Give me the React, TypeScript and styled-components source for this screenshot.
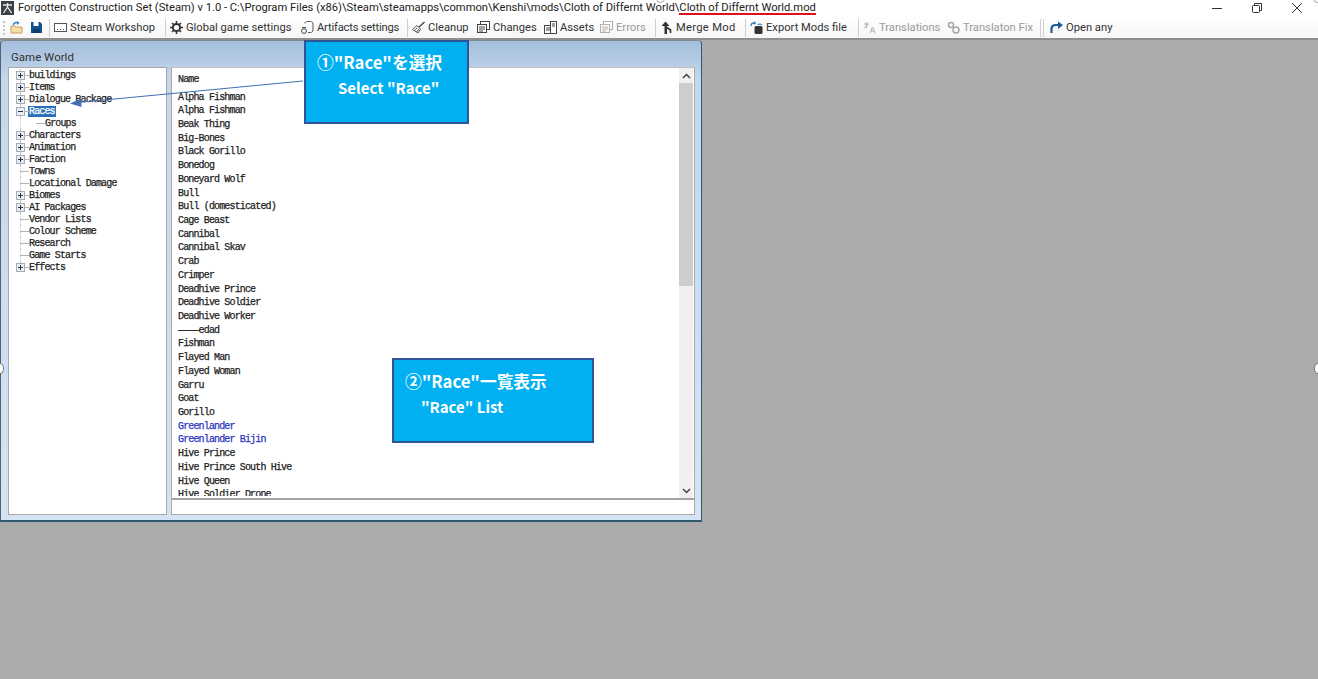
import React from "react";
import styled, { createGlobalStyle } from "styled-components";

const TITLE_PATH = "Forgotten Construction Set (Steam) v 1.0 - C:\\Program Files (x86)\\Steam\\steamapps\\common\\Kenshi\\mods\\Cloth of Differnt World\\";
const TITLE_FILE = "Cloth of Differnt World.mod";

const TreeData = [
  { label: "buildings", kind: "plus" },
  { label: "Items", kind: "plus" },
  { label: "Dialogue Package", kind: "plus" },
  { label: "Races", kind: "minus", selected: true },
  { label: "Groups", kind: "child" },
  { label: "Characters", kind: "plus" },
  { label: "Animation", kind: "plus" },
  { label: "Faction", kind: "plus" },
  { label: "Towns", kind: "leaf" },
  { label: "Locational Damage", kind: "leaf" },
  { label: "Biomes", kind: "plus" },
  { label: "AI Packages", kind: "plus" },
  { label: "Vendor Lists", kind: "leaf" },
  { label: "Colour Scheme", kind: "leaf" },
  { label: "Research", kind: "leaf" },
  { label: "Game Starts", kind: "leaf" },
  { label: "Effects", kind: "plus", last: true },
];

const RaceData = [
  "Alpha Fishman", "Alpha Fishman", "Beak Thing", "Big-Bones", "Black Gorillo", "Bonedog",
  "Boneyard Wolf", "Bull", "Bull (domesticated)", "Cage Beast", "Cannibal", "Cannibal Skav",
  "Crab", "Crimper", "Deadhive Prince", "Deadhive Soldier", "Deadhive Worker", "————edad",
  "Fishman", "Flayed Man", "Flayed Woman", "Garru", "Goat", "Gorillo", "Greenlander",
  "Greenlander Bijin", "Hive Prince", "Hive Prince South Hive", "Hive Queen", "Hive Soldier Drone",
];

const ModifiedRaces = ["Greenlander", "Greenlander Bijin"];

const Svg = (props: React.SVGProps<SVGSVGElement>) => (
  <svg width="13" height="13" viewBox="0 0 13 13" fill="none" {...props} />
);

const AppIcon = () => (
  <svg width="13" height="14" viewBox="0 0 13 14">
    <rect width="13" height="14" fill="#3c3f44" />
    <path d="M2 4h9M6.5 2v4L2.5 12M6.5 6l4 6" stroke="#e8e8e8" strokeWidth="1.3" fill="none" />
  </svg>
);

const OpenIcon = () => (
  <Svg>
    <path d="M1 5h4l1 1h6v6H1z" fill="#f4dca6" stroke="#c9a05a" />
    <path d="M3 4c1-2 3-3 5-2" stroke="#2f7fc1" strokeWidth="1.4" />
    <path d="M7 0l2.5 2L7 4z" fill="#2f7fc1" />
  </Svg>
);

const SaveIcon = () => (
  <Svg>
    <path d="M1 1h9l2 2v9H1z" fill="#12508f" />
    <rect x="3.5" y="1" width="5" height="4" fill="#fff" />
    <rect x="3" y="8" width="7" height="4" fill="#0b3a6c" />
  </Svg>
);

const WorkshopIcon = () => (
  <Svg>
    <rect x="0.5" y="2.5" width="12" height="8" stroke="#555" fill="#fff" />
    <path d="M3 8.5h1M6 8.5h1M9 8.5h1" stroke="#555" />
  </Svg>
);

const GearIcon = () => (
  <Svg>
    <circle cx="6.5" cy="6.5" r="3.6" stroke="#333" strokeWidth="2" />
    <path d="M6.5 0v2.5M6.5 10.5V13M0 6.5h2.5M10.5 6.5H13M2 2l1.8 1.8M9.2 9.2 11 11M11 2 9.2 3.8M3.8 9.2 2 11" stroke="#333" strokeWidth="1.6" />
  </Svg>
);

const ArtifactIcon = () => (
  <Svg>
    <path d="M4 2.5C4 1 5 .5 6.5.5h3c1.5 0 2.5 1 2.5 2.5v6c0 1.5-1 2.5-2.5 2.500H7" stroke="#555" />
    <circle cx="3" cy="10" r="2.400" stroke="#444" />
    <path d="M1 6.500h4" stroke="#666" />
  </Svg>
);

const BroomIcon = () => (
  <Svg>
    <path d="M12.500 1 6.500 6.500" stroke="#444" strokeWidth="1.300" />
    <path d="M5 4.500 8.500 8 6 12 .5 8.500z" fill="#fff" stroke="#555" />
    <path d="M2.500 9.500 5 7M4.500 11 7 8" stroke="#555" />
  </Svg>
);

const ChangesIcon = ({ muted }: { muted?: boolean }) => (
  <Svg style={{ opacity: muted ? 0.4 : 1 }}>
    <rect x="3.5" y="0.5" width="9" height="8" stroke="#444" fill="#fff" />
    <rect x="0.5" y="3.5" width="9" height="8" stroke="#444" fill="#fff" />
    <path d="M2 6h6M2 8h6M2 10h4" stroke="#444" />
  </Svg>
);

const AssetsIcon = () => (
  <Svg>
    <rect x="0.5" y="4.5" width="7" height="8" stroke="#444" fill="#fff" />
    <rect x="6.5" y="0.5" width="6" height="12" stroke="#444" fill="#fff" />
    <path d="M2 7h4M2 9h4M8 3h3M8 5h3" stroke="#444" />
  </Svg>
);

const MergeIcon = () => (
  <Svg>
    <path d="M1.500 5 5.500.5 9.500 5H7v8H4.500V5z" fill="#333" />
    <path d="M7 6.500 10.500 9v3" stroke="#333" strokeWidth="1.600" />
  </Svg>
);

const ExportIcon = () => (
  <Svg>
    <rect x="4.500" y="5" width="8" height="8" rx="1.500" fill="#333" />
    <path d="M1 5c0-2 1-3 3-3" stroke="#2f7fc1" strokeWidth="1.300" />
    <path d="M4 0l2.200 2L4 4z" fill="#2f7fc1" />
    <path d="M7.500 3.500c1.500-.5 3-.5 4.500 0" stroke="#2f7fc1" strokeWidth="1.200" />
  </Svg>
);

const TranslateIcon = () => (
  <Svg style={{ opacity: 0.45 }}>
    <path d="M1 3h5M3.500 1v6M1 7l4-3M7 12l2.500-6L12 12M8 10h3" stroke="#555" />
  </Svg>
);

const FixIcon = () => (
  <Svg style={{ opacity: 0.45 }}>
    <circle cx="4" cy="4" r="2.500" stroke="#444" strokeWidth="1.500" />
    <circle cx="9" cy="9" r="3" stroke="#444" strokeWidth="1.500" />
  </Svg>
);

const OpenAnyIcon = () => (
  <Svg>
    <path d="M1.500 12V8c0-2.500 2-4 4.500-4h3" stroke="#1c5c96" strokeWidth="2.200" />
    <path d="M8 0.500 13 4 8 8z" fill="#1c5c96" />
  </Svg>
);

const ToolbarData: { icon: React.ReactNode; label?: string; width?: number; tracking?: number; muted?: boolean; sep?: number }[] = [
  { icon: <OpenIcon /> },
  { icon: <SaveIcon />, sep: 1 },
  { icon: <WorkshopIcon />, label: "Steam Workshop", width: 86, sep: 1 },
  { icon: <GearIcon />, label: "Global game settings", width: 106 },
  { icon: <ArtifactIcon />, label: "Artifacts settings", width: 81, tracking: -0.2, sep: 1 },
  { icon: <BroomIcon />, label: "Cleanup", width: 40 },
  { icon: <ChangesIcon />, label: "Changes", width: 42 },
  { icon: <AssetsIcon />, label: "Assets", width: 31 },
  { icon: <ChangesIcon muted />, label: "Errors", width: 30, muted: true, sep: 1 },
  { icon: <MergeIcon />, label: "Merge Mod", width: 60, tracking: 0.3, sep: 1 },
  { icon: <ExportIcon />, label: "Export Mods file", width: 83, sep: 1 },
  { icon: <TranslateIcon />, label: "Translations", width: 59, muted: true },
  { icon: <FixIcon />, label: "Translaton Fix", width: 68, muted: true, sep: 2 },
  { icon: <OpenAnyIcon />, label: "Open any", width: 48 },
];

export default function App() {
  return (
    <Page>
      <GlobalStyle />
      <TitleBar>
        <AppIcon />
        <TitleText>
          {TITLE_PATH}
          <TitleFile>{TITLE_FILE}</TitleFile>
        </TitleText>
        <WindowControls>
          <svg width="10" height="10" viewBox="0 0 10 10">
            <path d="M0 5.500h10" stroke="#333" />
          </svg>
          <svg width="10" height="10" viewBox="0 0 10 10" fill="none">
            <path d="M2.500 2V.5h7v7H8" stroke="#333" />
            <rect x=".5" y="2.500" width="7" height="7" rx="1" stroke="#333" />
          </svg>
          <svg width="10" height="10" viewBox="0 0 10 10">
            <path d="M0 0l10 10M10 0 0 10" stroke="#333" />
          </svg>
        </WindowControls>
      </TitleBar>
      <Toolbar>
        <Grip />
        {ToolbarData.map((item, key) => (
          <React.Fragment key={key}>
            <ToolItem $muted={item.muted} $iconOnly={!item.label}>
              {item.icon}
              {item.label && (
                <ToolLabel $width={item.width} $tracking={item.tracking}>
                  {item.label}
                </ToolLabel>
              )}
            </ToolItem>
            {item.sep === 1 && <ToolSep />}
            {item.sep === 2 && (
              <DoubleSep>
                <ToolSep />
                <ToolSep />
              </DoubleSep>
            )}
          </React.Fragment>
        ))}
      </Toolbar>
      <Desktop>
        <GameWindow>
          <Caption>Game World</Caption>
          <Client>
            <TreePanel>
              {TreeData.map((item, key) => (
                <TreeRow key={key} $child={item.kind === "child"} $last={item.last}>
                  {item.kind === "plus" || item.kind === "minus" ? (
                    <Expander>
                      <svg width="13" height="9" viewBox="0 0 13 9" fill="none">
                        <rect x=".5" y=".5" width="8" height="8" fill="#e9eef5" stroke="#a3adb8" />
                        <path d="M2 4.500h5" stroke="#334" />
                        {item.kind === "plus" && <path d="M4.500 2v5" stroke="#334" />}
                        <path d="M9 4.500h4" stroke="#b4b4b4" />
                      </svg>
                    </Expander>
                  ) : (
                    <Stem />
                  )}
                  <TreeLabel $selected={item.selected}>{item.label}</TreeLabel>
                </TreeRow>
              ))}
            </TreePanel>
            <RightPane>
              <ListFrame>
                <RaceList>
                  <ListHeader>Name</ListHeader>
                  {RaceData.map((name, key) => (
                    <RaceRow key={key} $modified={ModifiedRaces.includes(name)}>
                      {name}
                    </RaceRow>
                  ))}
                </RaceList>
                <ScrollBar>
                  <ScrollArrow>
                    <svg width="9" height="6" viewBox="0 0 9 6" fill="none">
                      <path d="M1 5l3.500-3.500L8 5" stroke="#444" strokeWidth="1.500" />
                    </svg>
                  </ScrollArrow>
                  <ScrollTrack>
                    <ScrollThumb />
                  </ScrollTrack>
                  <ScrollArrow>
                    <svg width="9" height="6" viewBox="0 0 9 6" fill="none">
                      <path d="M1 1l3.500 3.500L8 1" stroke="#444" strokeWidth="1.500" />
                    </svg>
                  </ScrollArrow>
                </ScrollBar>
              </ListFrame>
              <Footer />
            </RightPane>
          </Client>
        </GameWindow>
        <ResizeDot $side="left" />
        <ResizeDot $side="right" />
      </Desktop>

      <CornerArc $left={656} />
      <CornerArc $left={1313} />
      <Callout $left={304} $top={40} $width={165} $height={84} $pad={0}>
        <CalloutHead $indent={11}>①"Race"を選択</CalloutHead>
        <CalloutSub $indent={32}>Select "Race"</CalloutSub>
      </Callout>
      <Callout $left={392} $top={358} $width={202} $height={85} $pad={1}>
        <CalloutHead $indent={11}>②"Race"一覧表示</CalloutHead>
        <CalloutSub $indent={27}>"Race" List</CalloutSub>
      </Callout>
      <ArrowLayer width="320" height="120" viewBox="0 0 320 120">
        <path d="M303 81 78 102.500" stroke="#3f6fb5" strokeWidth="1" />
        <path d="M70 103.500 81 98.500 81.500 107z" fill="#3f6fb5" />
      </ArrowLayer>
    </Page>
  );
}

const GlobalStyle = createGlobalStyle`
  html, body {
    margin: 0;
    padding: 0;
    background: #ababab;
    overflow: hidden;
  }
`;

const Page = styled.div`
  position: relative;
  width: 1318px;
  height: 679px;
  display: flex;
  flex-direction: column;
  overflow: hidden;
  font-family: Roboto, "Noto Sans", sans-serif;
`;

const TitleBar = styled.div`
  height: 16px;
  flex: none;
  display: flex;
  align-items: center;
  padding-left: 1px;
  background: #fff;
`;

const TitleText = styled.div`
  margin-left: 4px;
  font-size: 11.2px;
  line-height: 14px;
  color: #222;
  white-space: nowrap;
`;

const TitleFile = styled.span`
  position: relative;
  &::after {
    content: "";
    position: absolute;
    left: 0;
    right: 0;
    bottom: -1px;
    height: 2px;
    background: #e0101a;
  }
`;

const WindowControls = styled.div`
  margin-left: auto;
  width: 90px;
  margin-right: 16px;
  display: flex;
  justify-content: space-between;
  align-items: center;
`;

const Toolbar = styled.div`
  height: 24px;
  flex: none;
  box-sizing: border-box;
  display: flex;
  align-items: center;
  padding: 1px 0 0 3px;
  background: linear-gradient(#ffffff, #f6f6f6);
  border-bottom: 2px solid #8f8f8f;
`;

const Grip = styled.div`
  width: 2px;
  height: 14px;
  box-sizing: border-box;
  margin-right: 5px;
  border-left: 2px dotted #c4c4c4;
`;

const ToolItem = styled.div<{ $muted?: boolean; $iconOnly?: boolean }>`
  display: flex;
  align-items: center;
  gap: 3px;
  margin-right: ${(p) => (p.$iconOnly ? "6.5px" : "9px")};
  font-size: 11.2px;
  line-height: 14px;
  white-space: nowrap;
  color: ${(p) => (p.$muted ? "#9a9a9a" : "#333")};
`;

const ToolLabel = styled.span<{ $width?: number; $tracking?: number }>`
  display: inline-block;
  width: ${(p) => p.$width}px;
  letter-spacing: ${(p) => p.$tracking ?? 0}px;
`;

const ToolSep = styled.div`
  width: 1px;
  height: 18px;
  margin-right: 4px;
  background: #cfcfcf;
`;

const DoubleSep = styled.div`
  display: flex;
  margin-right: 4px;
  & > div {
    margin-right: 2px;
  }
`;

const Desktop = styled.div`
  position: relative;
  flex: 1;
  background: #ababab;
`;

const GameWindow = styled.div`
  box-sizing: border-box;
  width: 702px;
  height: 482px;
  display: flex;
  flex-direction: column;
  background: linear-gradient(#a4bedb, #c4d8ec 8%, #d4e4f4);
  border: 1px solid #2d5a6e;
  border-top-color: #7e8b96;
  border-left-color: #55616c;
  border-bottom-width: 2px;
  border-radius: 4px 4px 0 0;
`;

const Caption = styled.div`
  height: 26px;
  flex: none;
  box-sizing: border-box;
  padding: 9px 0 0 10px;
  font-size: 11.5px;
  line-height: 14px;
  color: #333;
`;

const Client = styled.div`
  flex: 1;
  min-height: 0;
  display: flex;
  gap: 4px;
  padding: 0 6px 5px 7px;
`;

const TreePanel = styled.div`
  width: 159px;
  flex: none;
  box-sizing: border-box;
  padding: 1px 0 0 7px;
  background: #fff;
  border: 1px solid #a9a9a9;
  overflow: hidden;
`;

const TreeRow = styled.div<{ $child?: boolean; $last?: boolean }>`
  position: relative;
  height: 12px;
  display: flex;
  align-items: center;
  padding-left: ${(p) => (p.$child ? "16px" : "0")};
  &::before {
    content: "";
    position: absolute;
    left: 4px;
    top: 0;
    height: ${(p) => (p.$last ? "6px" : "12px")};
    border-left: 1px dotted #c6c6c6;
  }
`;

const Expander = styled.div`
  position: relative;
  width: 13px;
  height: 9px;
  display: flex;
  flex: none;
`;

const Stem = styled.div`
  width: 9px;
  height: 1px;
  margin-left: 4px;
  flex: none;
  background: #b4b4b4;
`;

const monoText = `
  font-family: "Liberation Mono", monospace;
  font-size: 10px;
  font-weight: 400;
  letter-spacing: -0.85px;
  white-space: nowrap;
  -webkit-text-stroke: 0.25px currentColor;
`;

const TreeLabel = styled.span<{ $selected?: boolean }>`
  ${monoText}
  line-height: 11px;
  padding: 0 1px;
  margin-left: -1px;
  background: ${(p) => (p.$selected ? "#2a6fb8" : "transparent")};
  color: ${(p) => (p.$selected ? "#fff" : "#222")};
`;

const RightPane = styled.div`
  flex: 1;
  min-width: 0;
  display: flex;
  flex-direction: column;
  background: #fff;
  border: 1px solid #a9a9a9;
  border-top-color: #c0c0c0;
`;

const ListFrame = styled.div`
  flex: 1;
  min-height: 0;
  display: flex;
  padding-right: 1px;
  border-bottom: 2px solid #a2a2a2;
`;

const RaceList = styled.div`
  flex: 1;
  min-width: 0;
  overflow: hidden;
  padding: 4.5px 0 0 6px;
  clip-path: inset(0 0 2px 0);
`;

const ListHeader = styled.div`
  ${monoText}
  height: 18px;
  line-height: 14px;
  color: #222;
`;

const RaceRow = styled.div<{ $modified?: boolean }>`
  ${monoText}
  height: 13.72px;
  line-height: 13.72px;
  color: ${(p) => (p.$modified ? "#2a35c4" : "#222")};
`;

const ScrollBar = styled.div`
  width: 14px;
  flex: none;
  display: flex;
  flex-direction: column;
  background: #f0f0f0;
`;

const ScrollArrow = styled.div`
  height: 15px;
  flex: none;
  display: flex;
  align-items: center;
  justify-content: center;
`;

const ScrollTrack = styled.div`
  flex: 1;
`;

const ScrollThumb = styled.div`
  height: 203px;
  background: #cdcdcd;
`;

const Footer = styled.div`
  height: 14px;
  flex: none;
  background: #fff;
`;

const ResizeDot = styled.div<{ $side: "left" | "right" }>`
  position: absolute;
  top: 323px;
  ${(p) => p.$side}: -4px;
  width: 8px;
  height: 11px;
  box-sizing: border-box;
  border-radius: 50%;
  background: #fff;
  border: 1px solid #777;
`;

const CornerArc = styled.div<{ $left: number }>`
  position: absolute;
  left: ${(p) => p.$left}px;
  top: -6px;
  width: 9px;
  height: 9px;
  box-sizing: border-box;
  border-radius: 50%;
  border: 1px solid #a5a5a5;
`;

const Callout = styled.div<{ $left: number; $top: number; $width: number; $height: number; $pad: number }>`
  position: absolute;
  left: ${(p) => p.$left}px;
  top: ${(p) => p.$top}px;
  width: ${(p) => p.$width}px;
  height: ${(p) => p.$height}px;
  padding-top: ${(p) => p.$pad}px;
  box-sizing: border-box;
  background: #00b0f0;
  border: 2px solid #2f5597;
  color: #fff;
  font-family: "Noto Sans CJK JP", "Noto Sans", sans-serif;
  font-weight: 700;
  display: flow-root;
`;

const CalloutHead = styled.div<{ $indent: number }>`
  margin: 8px 0 0 ${(p) => p.$indent}px;
  font-size: 16.7px;
  line-height: 24px;
  white-space: nowrap;
`;

const CalloutSub = styled.div<{ $indent: number }>`
  margin: 4px 0 0 ${(p) => p.$indent}px;
  font-size: 15px;
  line-height: 20px;
  white-space: nowrap;
`;

const ArrowLayer = styled.svg`
  position: absolute;
  left: 0;
  top: 0;
  pointer-events: none;
`;
